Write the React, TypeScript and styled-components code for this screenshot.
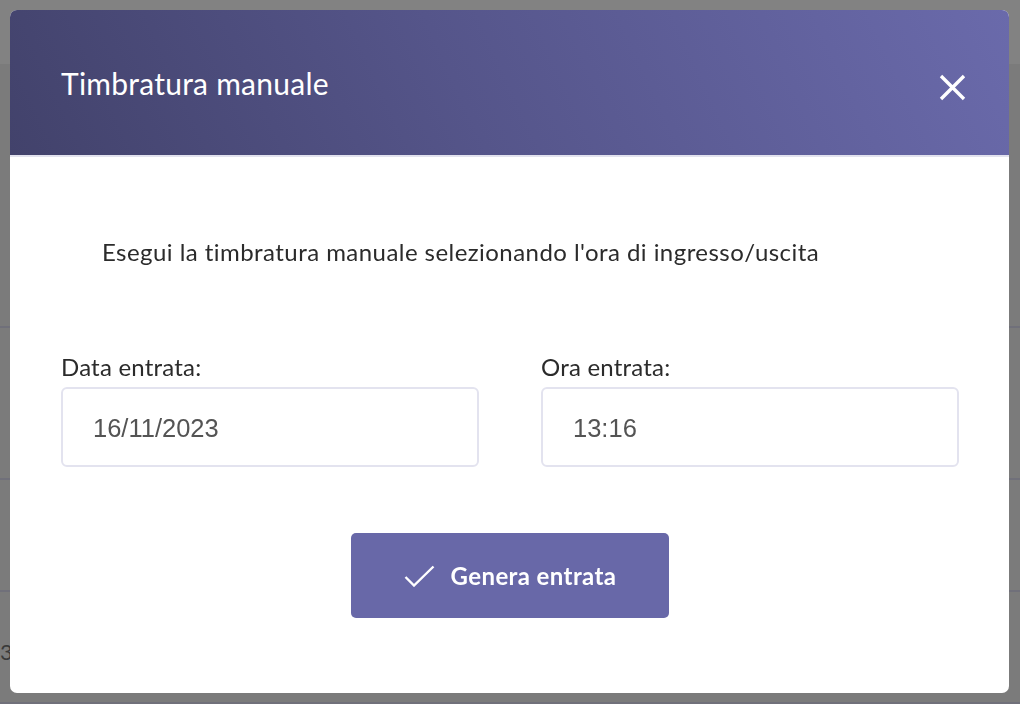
import React, { useState } from "react";
import styled, { createGlobalStyle } from "styled-components";

const GlobalStyle = createGlobalStyle`
  html, body {
    margin: 0;
    padding: 0;
    width: 1020px;
    height: 704px;
    overflow: hidden;
    background: #7b7b7b;
    font-family: Lato, "Open Sans", sans-serif;
  }
`;

const Page = styled.div`
  width: 1020px;
  height: 704px;
  display: flex;
  flex-direction: column;
  background: #7b7b7b;
`;

const PageTop = styled.div`
  height: 64px;
  background: #828282;
  flex-shrink: 0;
`;

const PageRow = styled.div<{ $height: number }>`
  height: ${(p) => p.$height}px;
  border-bottom: 2px solid #70707a;
  flex-shrink: 0;
  display: flex;
  align-items: center;
`;

const PageText = styled.span`
  margin: 8px 0 0 0;
  font-size: 22px;
  color: #3a3a3a;
`;

const Overlay = styled.div`
  position: fixed;
  inset: 0;
  padding: 10px 11px 11px 10px;
  display: flex;
`;

const Modal = styled.div`
  flex: 1;
  background: #ffffff;
  border-radius: 7px;
  overflow: hidden;
  display: flex;
  flex-direction: column;
`;

const ModalHeader = styled.div`
  height: 147px;
  flex-shrink: 0;
  box-sizing: border-box;
  padding: 0 42px 0 51px;
  display: flex;
  align-items: center;
  justify-content: space-between;
  background: linear-gradient(65deg, #42426b 0%, #55558a 45%, #6a6aab 100%);
  background-clip: padding-box;
  border-bottom: 2px solid #e2e2ee;
`;

const Title = styled.h2`
  margin: 0;
  font-weight: 400;
  font-size: 30px;
  line-height: 36px;
  letter-spacing: 0.25px;
  color: #ffffff;
`;

const CloseButton = styled.button`
  width: 30px;
  height: 30px;
  padding: 0;
  margin-top: 10px;
  border: none;
  background: transparent;
  display: flex;
  align-items: center;
  justify-content: center;
  cursor: pointer;
`;

const ModalBody = styled.div`
  flex: 1;
  padding: 80px 50px 0 51px;
  display: flex;
  flex-direction: column;
`;

const Intro = styled.p`
  margin: 0 0 0 41px;
  font-size: 24px;
  line-height: 30px;
  color: #2b2b2b;
  letter-spacing: 0.45px;
`;

const FieldGrid = styled.div`
  margin-top: 85px;
  display: grid;
  grid-template-columns: 1fr 1fr;
  column-gap: 62px;
`;

const Field = styled.label`
  display: flex;
  flex-direction: column;
  gap: 6px;
`;

const Label = styled.span`
  font-size: 24px;
  line-height: 29px;
  color: #2b2b2b;
  letter-spacing: 0.2px;
`;

const Input = styled.input`
  box-sizing: border-box;
  height: 80px;
  padding: 2px 30px 0;
  border: 2px solid #e3e3ef;
  border-radius: 6px;
  font-family: "Liberation Sans", Arial, sans-serif;
  font-size: 25.5px;
  color: #545454;
  background: #ffffff;
  outline: none;
`;

const Actions = styled.div`
  margin-top: 66px;
  display: flex;
  justify-content: center;
`;

const SubmitButton = styled.button`
  width: 318px;
  height: 85px;
  border: none;
  border-radius: 5px;
  background: #6868a8;
  color: #ffffff;
  display: flex;
  align-items: center;
  justify-content: center;
  gap: 16px;
  font-family: Lato, "Open Sans", sans-serif;
  font-weight: 700;
  font-size: 24px;
  letter-spacing: 0.4px;
  cursor: pointer;
`;

const CloseIcon = () => (
  <svg width="27" height="27" viewBox="0 0 27 27">
    <path d="M2 2 L25 25 M25 2 L2 25" stroke="#ffffff" strokeWidth="3.4" strokeLinecap="butt" />
  </svg>
);

const CheckIcon = () => (
  <svg width="31" height="22" viewBox="0 0 31 22">
    <path d="M1.5 12 L10 20.5 L29.5 1.5" fill="none" stroke="#ffffff" strokeWidth="2.4" />
  </svg>
);

const App = () => {
  const [date, setDate] = useState("16/11/2023");
  const [time, setTime] = useState("13:16");

  return (
    <>
      <GlobalStyle />
      <Page>
        <PageTop />
        <PageRow $height={262} />
        <PageRow $height={150} />
        <PageRow $height={110} />
        <PageRow $height={110}>
          <PageText>3:</PageText>
        </PageRow>
      </Page>
      <Overlay>
        <Modal>
          <ModalHeader>
            <Title>Timbratura manuale</Title>
            <CloseButton aria-label="Chiudi">
              <CloseIcon />
            </CloseButton>
          </ModalHeader>
          <ModalBody>
            <Intro>Esegui la timbratura manuale selezionando l'ora di ingresso/uscita</Intro>
            <FieldGrid>
              <Field>
                <Label>Data entrata:</Label>
                <Input value={date} onChange={(e) => setDate(e.target.value)} />
              </Field>
              <Field>
                <Label>Ora entrata:</Label>
                <Input value={time} onChange={(e) => setTime(e.target.value)} />
              </Field>
            </FieldGrid>
            <Actions>
              <SubmitButton>
                <CheckIcon />
                Genera entrata
              </SubmitButton>
            </Actions>
          </ModalBody>
        </Modal>
      </Overlay>
    </>
  );
};

export default App;
